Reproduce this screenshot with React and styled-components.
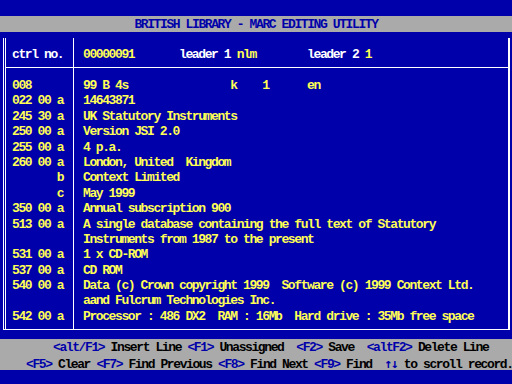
import React from 'react'
import styled, { createGlobalStyle } from 'styled-components'

const GlobalStyle = createGlobalStyle`
html, body {
  margin: 0;
  padding: 0;
  background: #0000aa;
}
`

const Screen = styled.div`
width: 512px;
height: 384px;
background: #0000aa;
padding-top: 16px;
box-sizing: border-box;
display: flex;
flex-direction: column;
font-family: "Liberation Mono", "DejaVu Sans Mono", monospace;
font-size: 13px;
font-weight: 700;
letter-spacing: -1.4px;
overflow: hidden;
`

const TitleBar = styled.div`
height: 16px;
box-sizing: border-box;
padding-top: 1px;
line-height: 15px;
background: #aaaaaa;
color: #0000aa;
text-align: center;
white-space: pre;
`

const Box = styled.div`
margin: 6px 2px 0 3px;
border-left: 3px double #ffffff;
border-right: 2px solid #ffffff;
border-bottom: 1px solid #ffffff;
display: grid;
grid-template-columns: 68px 1fr;
grid-template-rows: 30px auto;
`

const Cell = styled.div`
border-right: ${p => (p.$left ? '1px solid #ffffff' : 'none')};
border-bottom: ${p => (p.$head ? '1px solid #ffffff' : 'none')};
padding-top: ${p => (p.$head ? '0' : '8px')};
padding-bottom: ${p => (p.$head ? '0' : '7px')};
padding-left: ${p => (p.$left ? '6px' : '9px')};
display: flex;
flex-direction: column;
justify-content: ${p => (p.$head ? 'center' : 'flex-start')};
box-sizing: border-box;
`

const Line = styled.div`
height: 15.4px;
box-sizing: border-box;
padding-top: 5px;
line-height: 10.4px;
white-space: pre;
color: ${p => (p.$white ? '#ffffff' : '#ffff55')};
`

const White = styled.span`
color: #ffffff;
`

const Footer = styled.div`
margin-top: 9px;
height: 31px;
background: #aaaaaa;
display: flex;
flex-direction: column;
`

const FooterLine = styled.div`
height: 15.5px;
box-sizing: border-box;
padding-top: 2px;
line-height: 13.5px;
white-space: pre;
padding-left: ${p => p.$indent}px;
color: #000000;
`

const Key = styled.span`
color: #0000aa;
`

const Arrows = styled(Key)`
font-family: "DejaVu Sans Mono", monospace;
`

const fields = [
  { tag: '008', lines: ['99 B 4s                k    1      en'] },
  { tag: '022 00 a', lines: ['14643871'] },
  { tag: '245 30 a', lines: ['UK Statutory Instruments'] },
  { tag: '250 00 a', lines: ['Version JSI 2.0'] },
  { tag: '255 00 a', lines: ['4 p.a.'] },
  { tag: '260 00 a', lines: ['London, United  Kingdom'] },
  { tag: '       b', lines: ['Context Limited'] },
  { tag: '       c', lines: ['May 1999'] },
  { tag: '350 00 a', lines: ['Annual subscription 900'] },
  {
    tag: '513 00 a',
    lines: [
      'A single database containing the full text of Statutory',
      'Instruments from 1987 to the present',
    ],
  },
  { tag: '531 00 a', lines: ['1 x CD-ROM'] },
  { tag: '537 00 a', lines: ['CD ROM'] },
  {
    tag: '540 00 a',
    lines: [
      'Data (c) Crown copyright 1999  Software (c) 1999 Context Ltd.',
      'aand Fulcrum Technologies Inc.',
    ],
  },
  { tag: '542 00 a', lines: ['Processor : 486 DX2  RAM : 16Mb  Hard drive : 35Mb free space'] },
]

const App = () => {
  return (
    <>
      <GlobalStyle />
      <Screen>
        <TitleBar>BRITISH LIBRARY - MARC EDITING UTILITY</TitleBar>
        <Box>
          <Cell $left $head>
            <Line $white>ctrl no.</Line>
          </Cell>
          <Cell $head>
            <Line>
              00000091       <White>leader 1 </White>nlm        <White>leader 2 </White>1
            </Line>
          </Cell>
          <Cell $left>
            {fields.map(f =>
              f.lines.map((l, i) => <Line key={f.tag + i}>{i === 0 ? f.tag : ' '}</Line>)
            )}
          </Cell>
          <Cell>
            {fields.map(f => f.lines.map((l, i) => <Line key={f.tag + i}>{l}</Line>))}
          </Cell>
        </Box>
        <Footer>
          <FooterLine $indent={53}>
            <Key>&lt;alt/F1&gt;</Key> Insert Line <Key>&lt;F1&gt;</Key> Unassigned  <Key>&lt;F2&gt;</Key> Save  <Key>&lt;altF2&gt;</Key> Delete Line
          </FooterLine>
          <FooterLine $indent={26}>
            <Key>&lt;F5&gt;</Key> Clear <Key>&lt;F7&gt;</Key> Find Previous <Key>&lt;F8&gt;</Key> Find Next <Key>&lt;F9&gt;</Key> Find  <Arrows>↑↓</Arrows> to scroll record.
          </FooterLine>
        </Footer>
      </Screen>
    </>
  )
}

export default App
